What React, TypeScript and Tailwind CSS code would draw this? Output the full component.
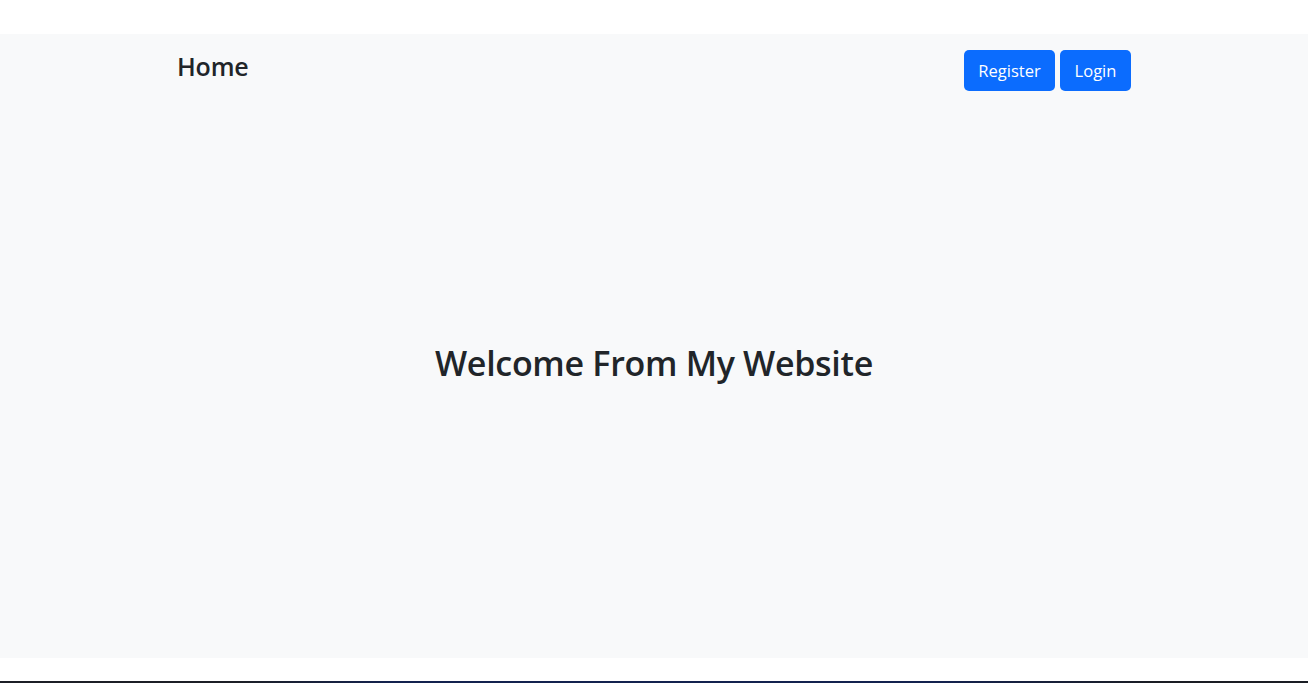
import React from "react";

export default function App() {
  return (
    <div className="w-[1308px] min-h-[683px] bg-white text-[#212529] [font-family:'Open_Sans',sans-serif]">
      <div className="h-[34px]" />
      <section className="h-[624px] bg-[#f8f9fa]">
        <div className="mx-auto w-[954px]">
          <nav className="flex items-start justify-between pt-[16px]">
            <a className="-mt-[1px] text-[25px] font-semibold leading-[34px] tracking-[-0.2px]">Home</a>
            <div className="flex gap-[5px]">
              <button className="h-[41px] w-[91px] rounded-[5px] bg-[#0b6cfe] pt-[2px] text-[16.5px] text-white">Register</button>
              <button className="h-[41px] w-[71px] rounded-[5px] bg-[#0b6cfe] pt-[2px] text-[16.5px] text-white">Login</button>
            </div>
          </nav>
          <h1 className="mt-[250px] text-center text-[34px] font-semibold leading-[44px] tracking-[-0.3px]">
            Welcome From My Website
          </h1>
        </div>
      </section>
      <div className="h-[23px]" />
      <div className="h-[2px] bg-[linear-gradient(to_right,#1c1f26_0%,#1c1f26_18%,#13224f_30%,#13224f_72%,#1a1d24_88%,#1a1d24_100%)]" />
    </div>
  );
}
